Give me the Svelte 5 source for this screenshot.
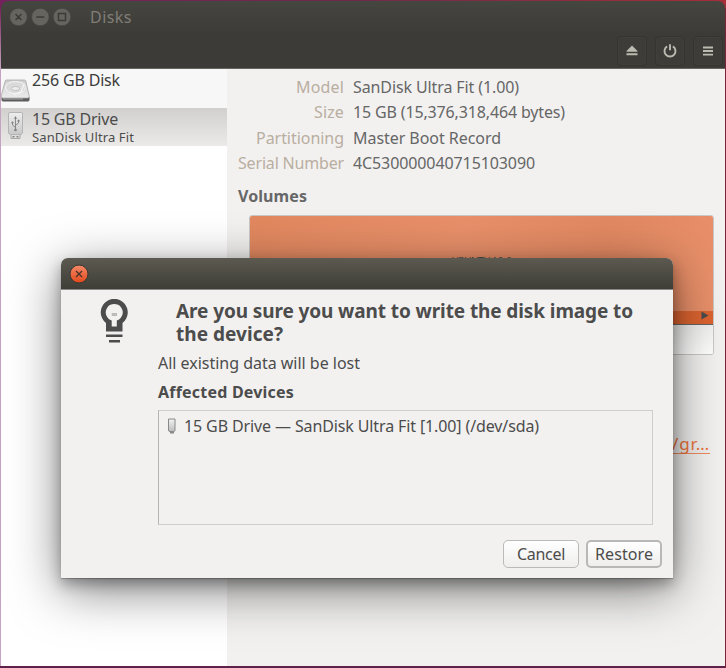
<script>
  const info = [
    ['Model', 48, 'SanDisk Ultra Fit (1.00)', 166],
    ['Size', 30, '15 GB (15,376,318,464 bytes)', 212],
    ['Partitioning', 88, 'Master Boot Record', 148],
    ['Serial Number', 106, '4C530000040715103090', 182],
  ];

  // Spread the letters of a label over a given width.
  function fit(node, width) {
    const natural = node.getBoundingClientRect().width;
    node.style.letterSpacing = `${(width - natural) / node.textContent.length}px`;
  }
</script>

<div class="desktop">
  <div class="window">
    <header>
      <div class="titlebar">
        <svg class="controls" width="66" height="20" viewBox="0 0 66 20">
          <g fill="#65645e" stroke="#45443f" stroke-width=".8">
            <circle cx="10.5" cy="10" r="8.800" /><circle cx="32.300" cy="10" r="8.800" /><circle cx="54" cy="10" r="8.800" />
          </g>
          <g fill="none" stroke="#3c3b37" stroke-width="1.5">
            <path d="M7.5 7l6 6M13.5 7l-6 6M28.300 10h8M50.5 6.5h7v7h-7z" />
          </g>
        </svg>
        <span class="title"><span use:fit={42}>Disks</span></span>
      </div>
      <div class="tools">
        <button aria-label="Eject"><svg width="14" height="14" viewBox="0 0 14 14"><path d="M7 1.500l5.500 5.500v.7h-11V7zM1.500 9.200h11v2h-11z" /></svg></button>
        <button aria-label="Power"><svg width="14" height="14" viewBox="0 0 14 14"><path d="M4.100 2.400a5.500 5.500 0 1 0 5.800 0M7 .2v6" fill="none" stroke="#bdbbb0" stroke-width="1.900" /></svg></button>
        <button aria-label="Menu"><svg width="14" height="14" viewBox="0 0 14 14"><path d="M2 2.500h10v1.900h-10zM2 6.100h10v1.900h-10zM2 9.700h10v1.900h-10z" /></svg></button>
      </div>
    </header>

    <div class="body">
      <aside>
        <div class="row disk">
          <svg width="30" height="39" viewBox="0 0 30 39">
            <defs><linearGradient id="m" x2="0" y2="1"><stop stop-color="#cfcfcf" /><stop offset="1" stop-color="#ececec" /></linearGradient></defs>
            <path d="M1.500 28h28v2.800q0 1.700-1.500 1.700h-25q-1.500 0-1.500-1.700z" fill="#5c5c5c" />
            <path d="M6.500 11h18q1 0 1.300 1l3.400 15q.3 2-1.500 2h-25q-1.800 0-1.500-2l4-15q.2-1 1.300-1z" fill="url(#m)" stroke="#a8a8a8" stroke-width=".8" />
            <ellipse cx="15.500" cy="18.500" rx="10" ry="6" fill="#dadada" stroke="#f6f6f6" />
            <ellipse cx="15.500" cy="19.500" rx="4" ry="2" fill="#ececec" stroke="#bababa" stroke-width=".8" />
            <path d="M24 15l-3 8-7 2.500" fill="none" stroke="#f6f6f6" stroke-width="1.200" />
            <path d="M3 30h20" stroke="#aaa" />
          </svg>
          <div class="label"><span use:fit={88}>256 GB Disk</span></div>
        </div>
        <div class="row drive">
          <svg width="30" height="38" viewBox="0 0 30 38">
            <defs><linearGradient id="u" x2="0" y2="1"><stop stop-color="#eee" /><stop offset="1" stop-color="#c8c8c8" /></linearGradient></defs>
            <path d="M11 25.500h9v5h-9z" fill="#ddd" stroke="#aaa" />
            <path d="M12.500 28h2v1.500h-2zM16.500 28h2v1.500h-2z" fill="#888" />
            <path d="M10 4.500h11.500q1 0 1 1.500v18q0 2.500-2 2.500h-10q-2 0-2-2.500V6q0-1.500 1.500-1.500z" fill="url(#u)" stroke="#b4b4b4" />
            <g fill="none" stroke="#888" stroke-width="1"><path d="M15.500 10v12M15.500 19.500l-3-2.500v-2M15.500 17.500l3-2.500v-2" /></g>
            <path d="M15.500 8l1.500 2.800h-3z" fill="#808080" /><circle cx="15.500" cy="22" r="1.300" fill="#808080" /><circle cx="12.500" cy="14.500" r="1.100" fill="#808080" /><path d="M17.600 11.800h1.900v1.900h-1.900z" fill="#808080" />
          </svg>
          <div class="label"><span use:fit={86}>15 GB Drive</span><br /><small use:fit={102}>SanDisk Ultra Fit</small></div>
        </div>
      </aside>

      <main>
        <dl>
          {#each info as [name, nameWidth, value, width]}
            <dt><span use:fit={nameWidth}>{name}</span></dt>
            <dd><span use:fit={width}>{value}</span></dd>
          {/each}
        </dl>
        <h2><span use:fit={69}>Volumes</span></h2>
        <div class="volumes">
          <div class="partition"><span use:fit={60}>UBUNTU 16_0</span></div>
          <div class="strip"><svg width="8" height="9" viewBox="0 0 8 9"><path d="M.5 .5l7 4-7 4z" fill="#4b4c4d" /></svg></div>
          <div class="actions"></div>
        </div>
        <div class="mount"><a href="#mount"><span use:fit={38}>/gr…</span></a></div>
      </main>
    </div>
  </div>

  <section class="dialog" role="dialog" aria-label="Confirm">
    <div class="dialog-title">
      <svg width="20" height="20" viewBox="0 0 20 20">
        <defs><linearGradient id="c" x2="0" y2="1"><stop stop-color="#f58a68" /><stop offset="1" stop-color="#e2481b" /></linearGradient></defs>
        <circle cx="10" cy="10" r="9" fill="url(#c)" stroke="#393832" />
        <path d="M7 7l6 6M13 7l-6 6" stroke="#49352b" stroke-width="1.400" />
      </svg>
    </div>
    <div class="dialog-body">
      <div class="message">
        <svg class="bulb" width="28" height="44" viewBox="0 0 28 44">
          <path d="M6 32.500v-8.500A13.500 13.500 0 1 1 22.500 24v8.500z" fill="#4c4c4c" />
          <path d="M11.700 27.500v-6A8.500 8.500 0 1 1 16.800 21.500v6z" fill="#f2f1f0" />
          <path d="M11.700 14h5.300v3h-5.300z" fill="#bbb" />
          <path d="M6 35.500h16.500V38H6zM9 41h11v2.500H9z" fill="#4c4c4c" />
        </svg>
        <h1><span use:fit={457}>Are you sure you want to write the disk image to</span><span use:fit={107}>the device?</span></h1>
      </div>
      <p><span use:fit={202}>All existing data will be lost</span></p>
      <h3><span use:fit={136}>Affected Devices</span></h3>
      <div class="devices">
        <svg width="10" height="16" viewBox="0 0 10 16"><defs><linearGradient id="s" x2="0" y2="1"><stop stop-color="#f2f2f2" /><stop offset="1" stop-color="#bdbdbd" /></linearGradient></defs><path d="M3 12.500h4v3h-4z" fill="#888" /><path d="M1.500 1h6.500v11q0 1.500-1.500 1.500h-3.500q-1.500 0-1.500-1.500z" fill="url(#s)" stroke="#888" /></svg>
        <span use:fit={355}>15 GB Drive — SanDisk Ultra Fit [1.00] (/dev/sda)</span>
      </div>
      <div class="buttons">
        <button><span use:fit={48}>Cancel</span></button>
        <button class="default"><span use:fit={58}>Restore</span></button>
      </div>
    </div>
  </section>
</div>

<style>
  .desktop {
    position: relative;
    width: 726px;
    height: 668px;
    box-sizing: border-box;
    padding: 1px 1px 2px;
    overflow: hidden;
    background: linear-gradient(90deg, transparent 725px, #7c2336 725px),
      linear-gradient(#77265e 0, #77265e 10px, #c5a4c1 68px, #c5a4c1 666px, #5f2049 666px);
    font: 16px/20px 'Noto Sans', sans-serif;
    color: #4c4c4c;
  }
  .desktop::before {
    content: '';
    position: absolute;
    inset: 0 0 auto;
    height: 8px;
    background: linear-gradient(90deg, #75215e, #6e2b4a 50%, #a52e38);
  }
  span, small { white-space: pre; display: inline-block; }
  .window { position: relative; height: 665px; display: flex; flex-direction: column; }
  header {
    height: 68px;
    box-sizing: border-box;
    border-bottom: 1px solid #66655f;
    border-radius: 7px 7px 0 0;
    background: linear-gradient(#464641, #3c3b37 50%);
    display: flex;
    flex-direction: column;
    justify-content: space-between;
  }
  .titlebar { display: flex; align-items: center; height: 32px; padding-left: 7px; }
  .title { margin-left: 16px; color: #807d77; }
  .tools { display: flex; justify-content: flex-end; gap: 8px; padding: 0 2px 2px 0; }
  .tools button {
    width: 30px; height: 30px; padding: 0;
    display: grid; place-items: center;
    border: 1px solid #35342f; border-radius: 4px;
    background: #3d3c38; box-shadow: inset 0 0 0 1px #403f3b;
  }
  .tools svg { fill: #bdbbb0; }
  .body { flex: 1; display: flex; min-height: 0; }
  aside { width: 226px; background: #fff; }
  .row { display: flex; }
  .row svg { margin-left: -1px; }
  .row .label { margin-left: 2px; line-height: 17px; padding-top: 3px; }
  .disk { height: 39px; background: #f7f7f7; color: #3c3c3c; }
  .drive { height: 38px; background: linear-gradient(#d1d0ce, #ebeae9); }
  small { font-size: 13px; line-height: 15px; }
  main { flex: 1; min-width: 0; padding: 8px 12px 0 11px; background: #f2f1f0; display: flex; flex-direction: column; }
  dl { display: grid; grid-template-columns: 106px 1fr; row-gap: 5.300px; column-gap: 9px; margin: 0; line-height: 20px; color: #666; }
  dt { text-align: right; color: #b9aea0; }
  dd { margin: 0; }
  h2 { margin: 13px 0 9px; font-size: 16px; line-height: 20px; color: #676767; }
  .volumes {
    margin-left: 11px; width: 465px; height: 140px; box-sizing: border-box;
    border: 1px solid #c9c7c4; border-radius: 3px; overflow: hidden;
    display: flex; flex-direction: column;
  }
  .partition {
    height: 95px; display: flex; justify-content: center; padding-top: 39px; box-sizing: border-box;
    font-size: 10px; line-height: 12px; color: #4c4c4c;
    background: linear-gradient(100deg, #e2885f, #e9906a 45%, #e28962 75%, #e9906a);
  }
  .strip { height: 13px; background: #dc6430; display: flex; justify-content: flex-end; align-items: center; padding-right: 4px; border-bottom: 1px solid #666; }
  .strip svg { margin-top: -4px; }
  .actions { flex: 1; background: linear-gradient(#f0f0ef, #fff); }
  .mount { margin-top: 80px; display: flex; justify-content: flex-end; padding-right: 3px; }
  .mount a { color: #f0743c; font-size: 17px; text-decoration: none; border-bottom: 1px solid #f08a5c; line-height: 18px; }
  .dialog {
    position: absolute; left: 61px; top: 258px; width: 612px; height: 320px;
    display: flex; flex-direction: column;
    border-radius: 7px 7px 0 0; background: #f2f1f0;
    box-shadow: 0 1px 1px rgba(0,0,0,.25), 0 6px 14px rgba(0,0,0,.3), 0 12px 50px rgba(0,0,0,.5);
  }
  .dialog-title {
    height: 32px; box-sizing: border-box; padding-left: 8px;
    display: flex; align-items: center;
    background: linear-gradient(#5c5a50, #3e3d37); border-bottom: 1px solid #8b8983; border-radius: 7px 7px 0 0;
  }
  .dialog-body { flex: 1; padding: 9px 11px 10px 97px; display: flex; flex-direction: column; }
  .message { display: flex; margin-left: -58px; }
  h1 { margin: 1px 0 0 49px; font-size: 19px; line-height: 22px; display: flex; flex-direction: column; align-items: flex-start; row-gap: 1px; }
  .bulb { margin-right: -1px; }
  p { margin: 8px 0 9px; }
  h3 { margin: 0 0 8px; font-size: 16px; line-height: 20px; }
  .devices {
    width: 495px; height: 115px; box-sizing: border-box; padding: 7px 8px;
    border: 1px solid #cfcdca; border-left-color: #b6b5b2;
    display: flex; align-items: flex-start; gap: 7px; line-height: 16px;
  }
  .buttons { margin-top: auto; display: flex; justify-content: flex-end; gap: 7px; }
  .buttons button {
    width: 76px; height: 28px; padding: 0;
    border: 1px solid #bcbab7; border-radius: 5px;
    background: linear-gradient(#fff, #efeeed);
    font: inherit; color: #4c4c4c;
  }
  .buttons .default { border: 2px solid #b9b8b6; }
</style>
